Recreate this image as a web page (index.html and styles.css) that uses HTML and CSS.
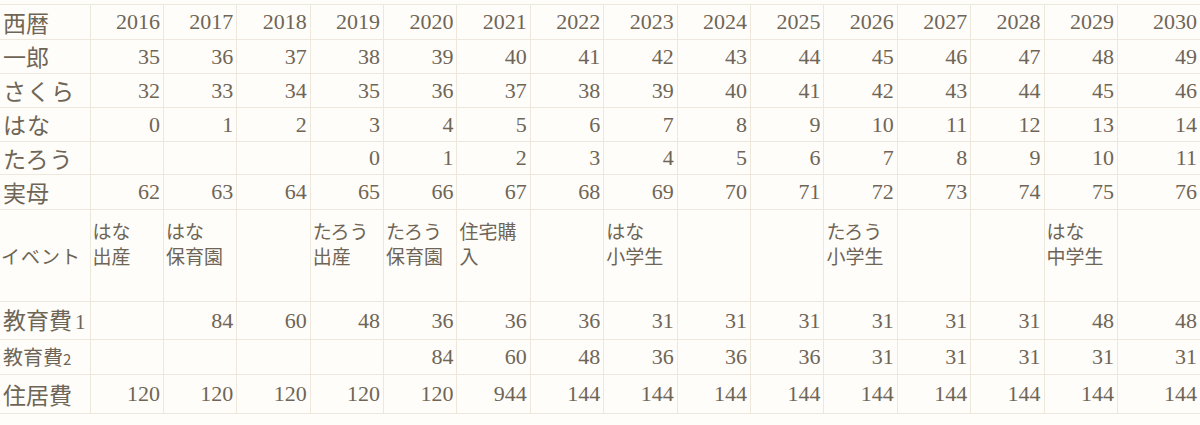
FILE: index.html
```html
<!DOCTYPE html>
<html lang="ja">
<head>
<meta charset="utf-8">
<link rel="stylesheet" href="styles.css">
</head>
<body>
<table class="plan">
<colgroup>
<col class="c-label">
<col class="c-year"><col class="c-year"><col class="c-year"><col class="c-year"><col class="c-year">
<col class="c-year"><col class="c-year"><col class="c-year"><col class="c-year"><col class="c-year">
<col class="c-year"><col class="c-year"><col class="c-year"><col class="c-year"><col class="c-last">
</colgroup>
<tbody>
<tr class="h35"><th>西暦</th><td>2016</td><td>2017</td><td>2018</td><td>2019</td><td>2020</td><td>2021</td><td>2022</td><td>2023</td><td>2024</td><td>2025</td><td>2026</td><td>2027</td><td>2028</td><td>2029</td><td>2030</td></tr>
<tr class="h34"><th>一郎</th><td>35</td><td>36</td><td>37</td><td>38</td><td>39</td><td>40</td><td>41</td><td>42</td><td>43</td><td>44</td><td>45</td><td>46</td><td>47</td><td>48</td><td>49</td></tr>
<tr class="h34"><th class="kana">さくら</th><td>32</td><td>33</td><td>34</td><td>35</td><td>36</td><td>37</td><td>38</td><td>39</td><td>40</td><td>41</td><td>42</td><td>43</td><td>44</td><td>45</td><td>46</td></tr>
<tr class="h34"><th class="kana">はな</th><td>0</td><td>1</td><td>2</td><td>3</td><td>4</td><td>5</td><td>6</td><td>7</td><td>8</td><td>9</td><td>10</td><td>11</td><td>12</td><td>13</td><td>14</td></tr>
<tr class="h33"><th class="kana">たろう</th><td></td><td></td><td></td><td>0</td><td>1</td><td>2</td><td>3</td><td>4</td><td>5</td><td>6</td><td>7</td><td>8</td><td>9</td><td>10</td><td>11</td></tr>
<tr class="h35"><th>実母</th><td>62</td><td>63</td><td>64</td><td>65</td><td>66</td><td>67</td><td>68</td><td>69</td><td>70</td><td>71</td><td>72</td><td>73</td><td>74</td><td>75</td><td>76</td></tr>
<tr class="h92 events"><th class="ev-label">イベント</th><td>はな<br>出産</td><td>はな<br>保育園</td><td></td><td>たろう<br>出産</td><td>たろう<br>保育園</td><td>住宅購<br>入</td><td></td><td>はな<br>小学生</td><td></td><td></td><td>たろう<br>小学生</td><td></td><td></td><td>はな<br>中学生</td><td></td></tr>
<tr class="h38"><th class="edu">教育費<span class="d1">1</span></th><td></td><td>84</td><td>60</td><td>48</td><td>36</td><td>36</td><td>36</td><td>31</td><td>31</td><td>31</td><td>31</td><td>31</td><td>31</td><td>48</td><td>48</td></tr>
<tr class="h35"><th class="edu2">教育費<span class="d2">2</span></th><td></td><td></td><td></td><td></td><td>84</td><td>60</td><td>48</td><td>36</td><td>36</td><td>36</td><td>31</td><td>31</td><td>31</td><td>31</td><td>31</td></tr>
<tr class="h39"><th>住居費</th><td>120</td><td>120</td><td>120</td><td>120</td><td>120</td><td>944</td><td>144</td><td>144</td><td>144</td><td>144</td><td>144</td><td>144</td><td>144</td><td>144</td><td>144</td></tr>
</tbody>
</table>
</body>
</html>
```

FILE: styles.css
```css
html, body {
  margin: 0;
  padding: 0;
  background: #fefdfa;
}
body {
  padding-top: 4px;
  width: 1200px;
  height: 421px;
  overflow: hidden;
}
.plan {
  border-collapse: collapse;
  table-layout: fixed;
  width: 1200px;
  color: #6f6556;
  border-bottom: 1px solid #eee7dc;
}
.c-label { width: 90px; }
.c-year { width: 73.4px; }
.c-last { width: auto; }

.plan tr { border-top: 1px solid #eee7dc; }
.plan th, .plan td {
  padding: 0;
  vertical-align: middle;
  white-space: nowrap;
  overflow: visible;
}
.plan th {
  text-align: left;
  padding-left: 3px;
  font-family: "Noto Sans CJK JP", "Noto Sans", sans-serif;
  font-weight: 400;
  font-size: 23px;
  line-height: 1;
}
.plan th.kana { letter-spacing: 1px; }
.plan td {
  border-left: 1px solid #eee7dc;
  text-align: right;
  padding-right: 3px;
  font-family: "Liberation Serif", "DejaVu Serif", serif;
  font-size: 22px;
  line-height: 1;
}
.h33 { height: 33px; }
.h34 { height: 34px; }
.h35 { height: 35px; }
.h38 { height: 38px; }
.h39 { height: 39px; }
.h92 { height: 92px; }

.events th.ev-label {
  font-size: 19px;
  padding-left: 1px;
  letter-spacing: 1px;
}
.events td {
  text-align: left;
  padding: 0 0 25px 2px;
  font-family: "Noto Sans CJK JP", "Noto Sans", sans-serif;
  font-size: 19px;
  line-height: 25px;
}
.edu { font-size: 21px; }
.edu .d1 {
  font-family: "Liberation Serif", serif;
  font-size: 21px;
  margin-left: 3px;
}
.plan th.edu2 { font-size: 20px; }
.edu2 .d2 {
  font-size: 15px;
}
```
